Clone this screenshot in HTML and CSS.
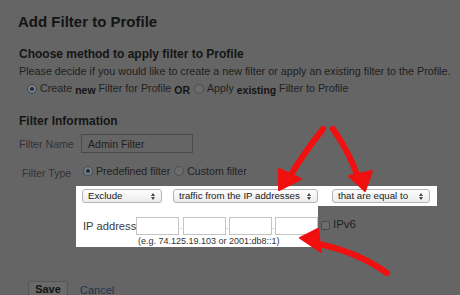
FILE: index.html
```html
<!DOCTYPE html>
<html>
<head>
<meta charset="utf-8">
<link rel="stylesheet" href="styles.css">
</head>
<body>
<div class="page">
  <h1 class="title">Add Filter to Profile</h1>
  <section class="method">
    <h2 class="heading">Choose method to apply filter to Profile</h2>
    <p class="desc">Please decide if you would like to create a new filter or apply an existing filter to the Profile.</p>
    <div class="radio-row">
      <span class="radio on"></span><span>Create <b class="low">new</b> Filter for Profile <b class="low">OR</b></span>
      <span class="radio"></span><span>Apply <b class="low">existing</b> Filter to Profile</span>
    </div>
  </section>
  <section class="info">
    <h2 class="heading">Filter Information</h2>
    <div class="field-row">
      <span class="label">Filter Name</span>
      <div class="text-input">Admin Filter</div>
    </div>
    <div class="field-row type-row">
      <span class="label">Filter Type</span>
      <span class="radio on"></span><span>Predefined filter</span>
      <span class="radio"></span><span>Custom filter</span>
    </div>
    <div class="select-strip">
      <div class="select w1">Exclude<span class="updown"></span></div>
      <div class="select w2">traffic from the IP addresses<span class="updown"></span></div>
      <div class="select w3">that are equal to<span class="updown"></span></div>
    </div>
    <div class="ip-row">
      <div class="ip-box">
        <div class="ip-line">
          <span class="ip-label">IP address</span>
          <span class="octet"></span><span class="dot">.</span><span class="octet"></span><span class="dot">.</span><span class="octet"></span><span class="dot">.</span><span class="octet"></span>
        </div>
        <div class="hint">(e.g. 74.125.19.103 or 2001:db8::1)</div>
      </div>
      <span class="check"></span><span class="ipv6">IPv6</span>
    </div>
  </section>
  <div class="actions">
    <span class="btn">Save</span>
    <span class="link">Cancel</span>
  </div>
</div>
<svg class="arrows" width="460" height="295" viewBox="0 0 460 295">
  <g fill="none" stroke="#f01010" stroke-width="6" stroke-linecap="round">
    <path d="M323,129 Q306,150 290,176"/>
    <path d="M333,129 Q348,150 358,177"/>
    <path d="M387,273 Q356,251 314,243"/>
  </g>
  <g fill="#f01010" stroke="#f01010" stroke-width="2" stroke-linejoin="round">
    <polygon points="279,169 301,179 279,190"/>
    <polygon points="349,176 372,171 365,191"/>
    <polygon points="300,238 318,229 321,252"/>
  </g>
</svg>
</body>
</html>
```

FILE: styles.css
```css
html, body {
  margin: 0;
  padding: 0;
}
body {
  width: 460px;
  height: 295px;
  overflow: hidden;
  background: #656565;
  font-family: "Liberation Sans", Arial, sans-serif;
  color: #1c1c1c;
  position: relative;
}
.page {
  padding: 12px 0 0 19px;
}
.title {
  margin: 0 0 0 -1px;
  font-size: 15px;
  line-height: 19px;
  font-weight: bold;
  color: #141414;
}
.method {
  margin-top: 16px;
}
.heading {
  margin: 0;
  font-size: 12px;
  line-height: 15px;
  font-weight: bold;
  color: #151515;
}
.desc {
  margin: 3px 0 0;
  font-size: 10.75px;
  line-height: 13px;
  color: #1e1e1e;
  white-space: nowrap;
}
.radio-row {
  display: flex;
  align-items: center;
  margin: 3px 0 0 8px;
  font-size: 10.75px;
  line-height: 14px;
  color: #222;
  white-space: nowrap;
}
.low {
  position: relative;
  top: 2px;
  font-size: 10.4px;
  color: #141414;
}
.radio {
  display: inline-block;
  width: 10px;
  height: 10px;
  border-radius: 50%;
  border: 1px solid #4e4e4e;
  background: #6c6c6c;
  margin-right: 3px;
  margin-left: 4px;
  box-sizing: border-box;
  position: relative;
  flex: none;
}
.radio-row .radio:first-child { margin-left: 0; }
.radio.on {
  background: #7b8088;
  border-color: #3e4a58;
}
.radio.on::after {
  content: "";
  position: absolute;
  left: 2px;
  top: 2px;
  width: 4px;
  height: 4px;
  border-radius: 50%;
  background: #1f2d3e;
}
.info {
  margin-top: 18px;
}
.field-row {
  display: flex;
  align-items: center;
  margin-top: 5px;
  font-size: 10.6px;
  color: #222;
}
.label {
  width: 62px;
  color: #333;
  font-size: 10.6px;
}
.text-input {
  width: 112px;
  height: 19px;
  box-sizing: border-box;
  border: 1px solid #4a4a4a;
  padding: 3px 6px;
  font-size: 10.6px;
  line-height: 12px;
  color: #1e1e1e;
}
.type-row {
  margin-top: 12px;
  padding-left: 3px;
}
.type-row .label {
  width: 61px;
  position: relative;
  top: 2px;
}
.type-row .radio { margin-left: 0; }
.type-row .radio + span { margin-right: 4px; }
.select-strip {
  margin: 9px 0 0 57px;
  width: 361px;
  height: 20px;
  background: #fff;
  display: flex;
  align-items: center;
  padding-left: 6px;
  box-sizing: border-box;
}
.select {
  position: relative;
  height: 14px;
  box-sizing: border-box;
  border: 1px solid #b4b4b4;
  border-radius: 3px;
  background: linear-gradient(#fdfdfd, #ececec);
  font-size: 9.7px;
  line-height: 12px;
  padding-left: 5px;
  color: #1a1a1a;
  white-space: nowrap;
}
.w1 { width: 80px; }
.w2 { width: 145px; margin-left: 11px; }
.w3 { width: 98px; margin-left: 14px; }
.updown {
  position: absolute;
  right: 6px;
  top: 3px;
  width: 0;
  height: 0;
  border-left: 2px solid transparent;
  border-right: 2px solid transparent;
  border-bottom: 3px solid #444;
}
.updown::after {
  content: "";
  position: absolute;
  left: -2px;
  top: 4px;
  border-left: 2px solid transparent;
  border-right: 2px solid transparent;
  border-top: 3px solid #444;
}
.ip-row {
  display: flex;
  align-items: flex-start;
  margin-left: 57px;
}
.ip-box {
  width: 242px;
  height: 41px;
  background: #fff;
  box-sizing: border-box;
  padding: 11px 0 0 7px;
}
.ip-line {
  display: flex;
  align-items: center;
  height: 18px;
}
.ip-label {
  font-size: 11.2px;
  color: #3a3a3a;
  width: 55px;
  white-space: nowrap;
}
.octet {
  width: 43px;
  height: 18px;
  box-sizing: border-box;
  border: 1px solid #c4c4c4;
  background: #fff;
  flex: none;
}
.dot {
  width: 3.5px;
  text-align: center;
  font-size: 9px;
  color: #999;
  line-height: 18px;
}
.hint {
  margin: 1px 0 0 55px;
  font-size: 9px;
  line-height: 10px;
  color: #333;
  white-space: nowrap;
}
.check {
  width: 9px;
  height: 9px;
  box-sizing: border-box;
  border: 1px solid #4b4b4b;
  border-radius: 2px;
  background: #6d6d6d;
  margin: 15px 0 0 3px;
}
.ipv6 {
  font-size: 11.5px;
  color: #1f1f1f;
  margin: 12px 0 0 3px;
}
.actions {
  display: flex;
  align-items: center;
  margin: 34px 0 0 9px;
}
.btn {
  width: 40px;
  height: 17px;
  box-sizing: border-box;
  border: 1px solid #565656;
  border-radius: 2px;
  background: #6a6a6a;
  font-size: 11px;
  font-weight: bold;
  color: #141414;
  text-align: center;
  line-height: 15px;
}
.link {
  margin-left: 12px;
  font-size: 11px;
  color: #1d3650;
}
.arrows {
  position: absolute;
  left: 0;
  top: 0;
  pointer-events: none;
}
```
